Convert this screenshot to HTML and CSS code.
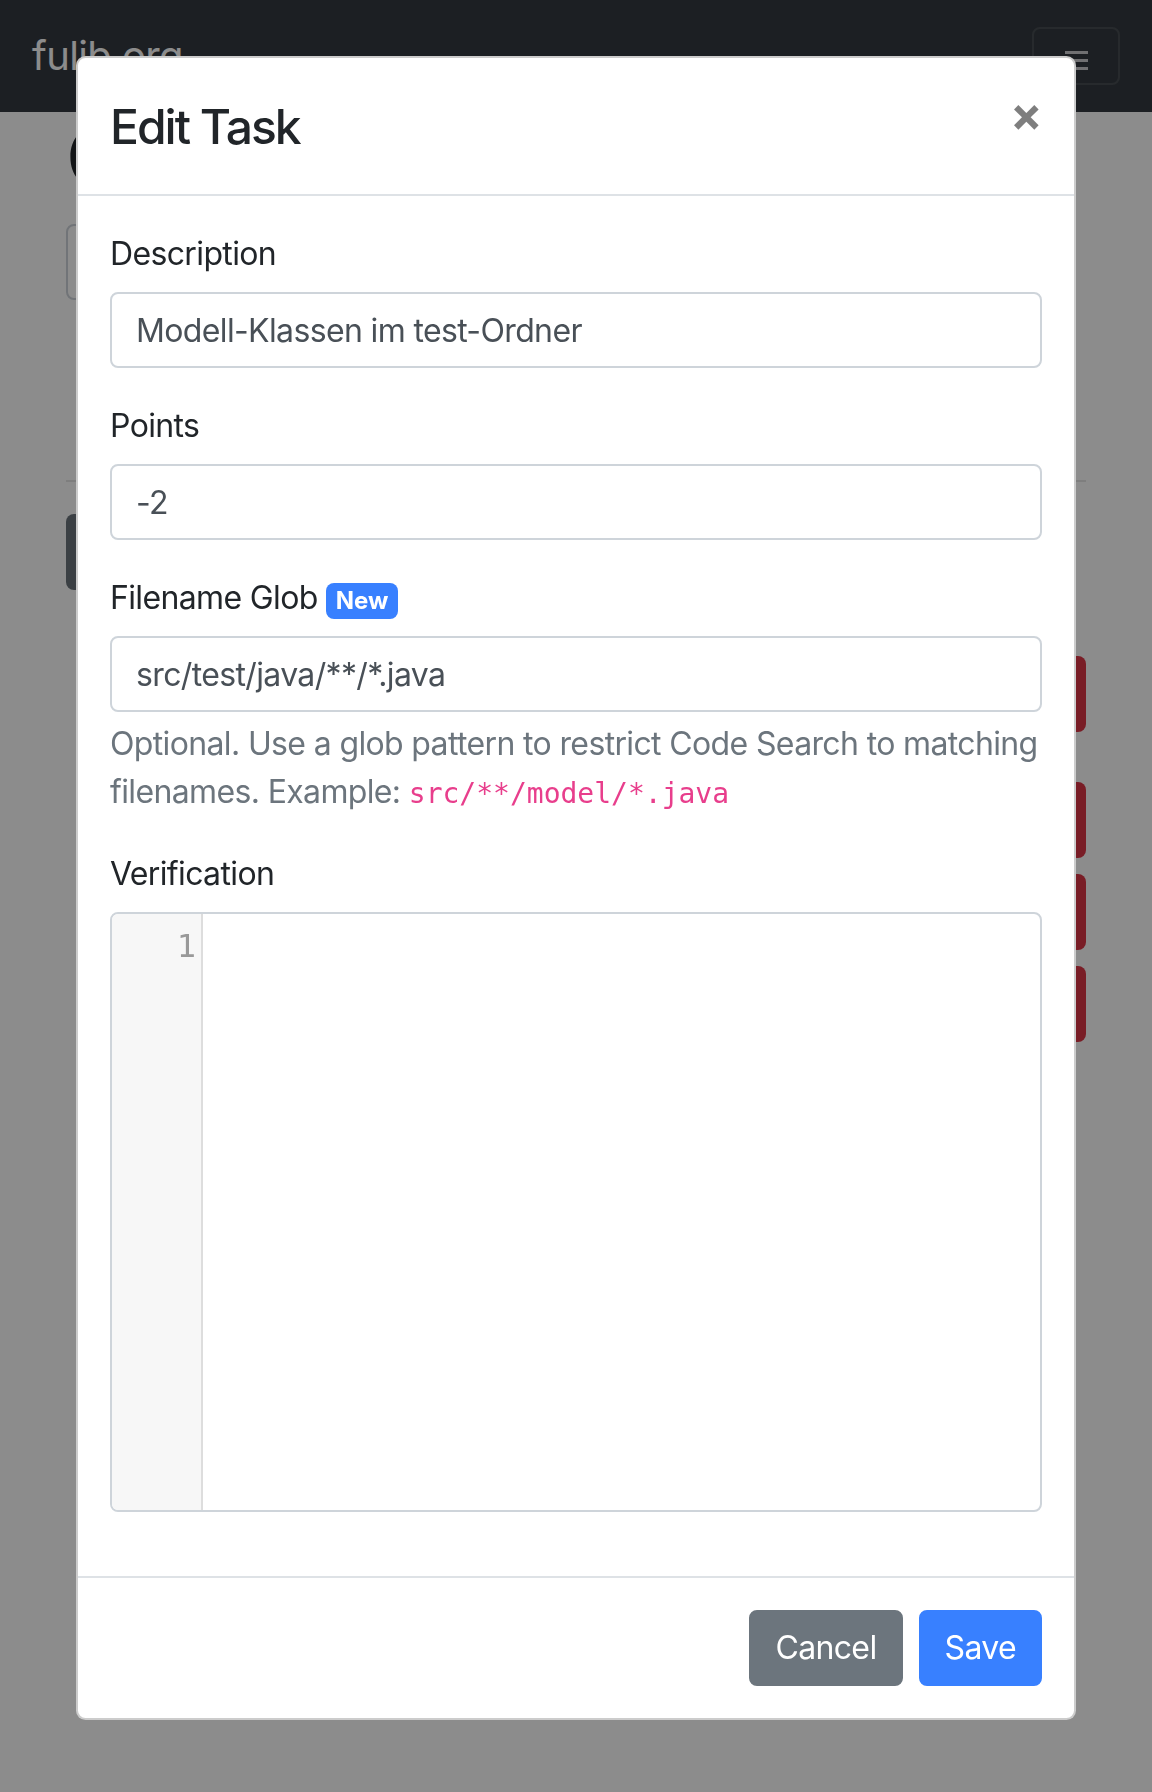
FILE: index.html
```html
<!DOCTYPE html>
<html lang="de">
<head>
<meta charset="utf-8">
<title>Edit Task</title>
<link rel="stylesheet" href="styles.css">
</head>
<body>
<nav class="navbar">
  <a class="brand" href="#">fulib.org</a>
  <button class="toggler" type="button" aria-label="Toggle navigation">
    <span class="toggler-bar"></span>
    <span class="toggler-bar"></span>
    <span class="toggler-bar"></span>
  </button>
</nav>

<main class="page">
  <h1 class="page-title">Create Assignment</h1>
  <div class="page-field"></div>
  <hr class="page-rule">
  <button class="page-btn page-btn-secondary" type="button">Add Task</button>
  <ul class="task-list">
    <li class="task-row task-row-first"><span class="task-name">Task</span><button class="page-btn page-btn-danger" type="button">Delete</button></li>
    <li class="task-row"><span class="task-name">Task</span><button class="page-btn page-btn-danger" type="button">Delete</button></li>
    <li class="task-row"><span class="task-name">Task</span><button class="page-btn page-btn-danger" type="button">Delete</button></li>
    <li class="task-row"><span class="task-name">Task</span><button class="page-btn page-btn-danger" type="button">Delete</button></li>
  </ul>
</main>

<div class="backdrop"></div>

<div class="modal">
  <div class="modal-dialog">
    <div class="modal-content">
      <div class="modal-header">
        <h4 class="modal-title">Edit Task</h4>
        <button class="close" type="button" aria-label="Close">&times;</button>
      </div>
      <div class="modal-body">
        <div class="form-group">
          <label class="form-label" for="desc">Description</label>
          <input class="form-control" id="desc" type="text" value="Modell-Klassen im test-Ordner">
        </div>
        <div class="form-group">
          <label class="form-label" for="points">Points</label>
          <input class="form-control" id="points" type="text" value="-2">
        </div>
        <div class="form-group">
          <label class="form-label" for="glob">Filename Glob <span class="badge">New</span></label>
          <input class="form-control" id="glob" type="text" value="src/test/java/**/*.java">
          <div class="form-text">Optional. Use a glob pattern to restrict Code Search to matching filenames. Example: <code class="code">src/**/model/*.java</code></div>
        </div>
        <div class="form-group">
          <label class="form-label">Verification</label>
          <div class="editor">
            <div class="editor-gutter"><div class="editor-linenumber">1</div></div>
            <div class="editor-lines"><div class="editor-line">&nbsp;</div></div>
          </div>
        </div>
      </div>
      <div class="modal-footer">
        <button class="btn btn-secondary" type="button">Cancel</button>
        <button class="btn btn-primary" type="button">Save</button>
      </div>
    </div>
  </div>
</div>
</body>
</html>
```
FILE: styles.css
```css
* { box-sizing: border-box; }

html, body {
  margin: 0;
  padding: 0;
}

body {
  font-family: "Inter", "Liberation Sans", sans-serif;
  font-size: 32px;
  line-height: 1.5;
  letter-spacing: -0.02em;
  color: #212529;
  background: #fff;
  height: 1792px;
  overflow: hidden;
}

input, button {
  letter-spacing: inherit;
}

/* ---------- background page ---------- */
.navbar {
  display: flex;
  align-items: center;
  justify-content: space-between;
  height: 112px;
  padding: 16px 32px;
  background: #343a40;
}

.brand {
  font-size: 40px;
  line-height: 60px;
  color: #fff;
  text-decoration: none;
}

.toggler {
  display: flex;
  flex-direction: column;
  align-items: center;
  gap: 5px;
  width: 88px;
  height: 58px;
  padding: 22px 0 0;
  margin-top: -1px;
  background: transparent;
  border: 2px solid rgba(255, 255, 255, 0.1);
  border-radius: 8px;
}

.toggler-bar {
  display: block;
  width: 23px;
  height: 3px;
  background: rgba(255, 255, 255, 0.75);
}

.page {
  padding: 0 66px;
}

.page-title {
  margin: 5px 0 27px;
  font-size: 80px;
  line-height: 80px;
  font-weight: 500;
  white-space: nowrap;
}

.page-field {
  width: 320px;
  height: 76px;
  border: 2px solid #ced4da;
  border-radius: 8px;
  margin-bottom: 180px;
}

.page-rule {
  margin: 0 0 32px;
  border: 0;
  border-top: 2px solid rgba(0, 0, 0, 0.1);
}

.page-btn {
  height: 76px;
  padding: 0 24px;
  font-family: inherit;
  font-size: 32px;
  color: #fff;
  border: 0;
  border-radius: 8px;
}

.page-btn-secondary {
  width: 300px;
  background: #6c757d;
  text-align: right;
}

.page-btn-danger {
  background: #dc3545;
}

.task-list {
  list-style: none;
  margin: 66px 0 0;
  padding: 0;
}

.task-row {
  display: flex;
  justify-content: space-between;
  align-items: center;
  margin-bottom: 16px;
}

.task-row-first {
  margin-bottom: 50px;
}

.task-name {
  padding-left: 120px;
}

.backdrop {
  position: fixed;
  inset: 0;
  background: rgba(0, 0, 0, 0.45);
}

/* ---------- modal ---------- */
.modal {
  position: fixed;
  inset: 0;
}

.modal-dialog {
  max-width: 1000px;
  margin: 56px auto;
}

.modal-content {
  background: #fff;
  border: 2px solid rgba(0, 0, 0, 0.2);
  border-radius: 9.6px;
}

.modal-header {
  display: flex;
  align-items: flex-start;
  justify-content: space-between;
  padding: 32px;
  border-bottom: 2px solid #dee2e6;
}

.modal-title {
  margin: 0;
  padding-top: 2px;
  font-size: 48px;
  font-weight: 500;
  line-height: 70px;
  letter-spacing: -2px;
}

.close {
  padding: 32px;
  margin: -32px -32px -32px auto;
  font-family: inherit;
  font-size: 48px;
  font-weight: 700;
  line-height: 1;
  color: #000;
  opacity: 0.5;
  text-shadow: 0 2px 0 #fff;
  background: transparent;
  border: 0;
}

.modal-body {
  padding: 32px;
}

.form-group {
  margin-bottom: 32px;
}

.form-label {
  display: inline-block;
  padding-top: 2px;
  margin-bottom: 14px;
}

.badge {
  display: inline-block;
  padding: 6px 9.6px;
  font-size: 24px;
  font-weight: 700;
  line-height: 1;
  letter-spacing: 0;
  color: #fff;
  background: #3880ff;
  border-radius: 8px;
  vertical-align: baseline;
}

.form-control {
  display: block;
  width: 100%;
  height: 76px;
  padding: 12px 24px;
  font-family: inherit;
  font-size: 32px;
  line-height: 1.5;
  color: #495057;
  background: #fff;
  border: 2px solid #ced4da;
  border-radius: 8px;
  outline: none;
}

.form-text {
  margin-top: 8px;
  color: #6c757d;
}

.code {
  font-family: "DejaVu Sans Mono", "Liberation Mono", monospace;
  font-size: 28px;
  letter-spacing: 0;
  color: #e83e8c;
}

.editor {
  display: flex;
  height: 600px;
  border: 2px solid #ced4da;
  border-radius: 8px;
  overflow: hidden;
  font-family: "DejaVu Sans Mono", "Liberation Mono", monospace;
  font-size: 32px;
  line-height: 48px;
  letter-spacing: 0;
}

.editor-gutter {
  width: 91px;
  padding-top: 8px;
  background: #f7f7f7;
  border-right: 2px solid #ddd;
}

.editor-linenumber {
  padding: 0 5px 0 10px;
  text-align: right;
  color: #999;
}

.editor-lines {
  flex: 1;
  padding: 8px 8px 0;
}

.modal-footer {
  display: flex;
  align-items: center;
  justify-content: flex-end;
  padding: 24px;
  border-top: 2px solid #dee2e6;
}

.btn {
  margin: 8px;
  padding: 12px 24px;
  font-family: inherit;
  font-size: 32px;
  line-height: 1.5;
  color: #fff;
  border: 2px solid transparent;
  border-radius: 8px;
}

.btn-secondary {
  background: #6c757d;
  border-color: #6c757d;
}

.btn-primary {
  background: #3880ff;
  border-color: #3880ff;
}
```
